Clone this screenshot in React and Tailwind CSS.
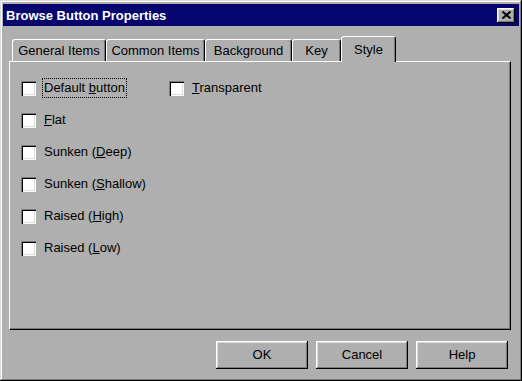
import React from 'react';

// classic 3d edges
const raised =
  'shadow-[inset_-1px_-1px_#000000,inset_1px_1px_#ffffff,inset_-2px_-2px_#7a7a7a,inset_2px_2px_#dcdcdc]';

const tabs = [
  { label: 'General Items', w: 'w-[94px]' },
  { label: 'Common Items', w: 'w-[99px]' },
  { label: 'Background', w: 'w-[87px]' },
  { label: 'Key', w: 'w-[49px]' },
];

const leftOptions = [
  { pre: 'Default ', key: 'b', post: 'utton', focus: true },
  { pre: '', key: 'F', post: 'lat' },
  { pre: 'Sunken (', key: 'D', post: 'eep)' },
  { pre: 'Sunken (', key: 'S', post: 'hallow)' },
  { pre: 'Raised (', key: 'H', post: 'igh)' },
  { pre: 'Raised (', key: 'L', post: 'ow)' },
];

function CheckBox() {
  return (
    <div className="w-[15px] h-[15px] shrink-0 bg-white shadow-[inset_1px_1px_#7a7a7a,inset_2px_2px_#000000,inset_-1px_-1px_#ffffff,inset_-2px_-2px_#dcdcdc]" />
  );
}

function Option({ pre, k, post, focus }) {
  return (
    <div className="flex items-center h-[32px]">
      <CheckBox />
      <span
        className={
          'ml-[6px] leading-[18px] px-[1px] ' +
          (focus ? 'border border-dotted border-black' : 'border border-transparent')
        }
      >
        {pre}
        <u>{k}</u>
        {post}
      </span>
    </div>
  );
}

function Button({ children }) {
  return (
    <button className={`w-[92px] h-[28px] bg-[#afafaf] text-black text-[13px] ${raised}`}>
      {children}
    </button>
  );
}

export default function App() {
  return (
    <div
      className="w-[522px] h-[381px] bg-[#afafaf] flex flex-col text-black text-[13px] shadow-[inset_-1px_-1px_#000000,inset_1px_1px_#dcdcdc,inset_-2px_-2px_#7a7a7a,inset_2px_2px_#ffffff]"
      style={{ fontFamily: '"Liberation Sans", Arial, sans-serif' }}
    >
      {/* title bar */}
      <div className="mx-[3px] mt-[4px] h-[22px] bg-[#06066e] flex items-center justify-between pl-[3px] pr-[4px]">
        <span className="text-white font-bold text-[13px] leading-none">Browse Button Properties</span>
        <div className={`w-[18px] h-[15px] bg-[#afafaf] flex items-center justify-center ${raised}`}>
          <svg width="9" height="8" viewBox="0 0 9 8">
            <path d="M0.5 0.5 L8.5 7.5 M8.5 0.5 L0.5 7.5" stroke="#000" strokeWidth="2" />
          </svg>
        </div>
      </div>

      {/* tabs */}
      <div className="ml-[9px] mr-[11px] mt-[10px] flex flex-col">
        <div className="flex items-end h-[25px] pl-[3px] relative z-10">
          {tabs.map(t => (
            <div
              key={t.label}
              className={`${t.w} h-[22px] flex items-center justify-center rounded-t-[3px] border-t border-l border-white border-r border-r-black shadow-[inset_-1px_0_#7a7a7a]`}
            >
              {t.label}
            </div>
          ))}
          <div className="w-[55px] h-[26px] -mb-[1px] bg-[#afafaf] flex items-start pt-[3px] justify-center rounded-t-[3px] border-t border-l border-white border-r border-r-black shadow-[inset_-1px_0_#7a7a7a]">
            Style
          </div>
        </div>

        {/* panel */}
        <div className="h-[269px] border-t border-l border-white border-r border-b border-r-black border-b-black shadow-[inset_-1px_-1px_#7a7a7a] flex pt-[10px] pl-[11px]">
          <div className="flex flex-col w-[148px]">
            {leftOptions.map(o => (
              <Option key={o.pre + o.key} pre={o.pre} k={o.key} post={o.post} focus={o.focus} />
            ))}
          </div>
          <div className="flex flex-col">
            <Option pre="" k="T" post="ransparent" />
          </div>
        </div>
      </div>

      {/* buttons */}
      <div className="flex justify-end gap-[8px] mt-[11px] mr-[14px]">
        <Button>OK</Button>
        <Button>Cancel</Button>
        <Button>Help</Button>
      </div>
    </div>
  );
}
